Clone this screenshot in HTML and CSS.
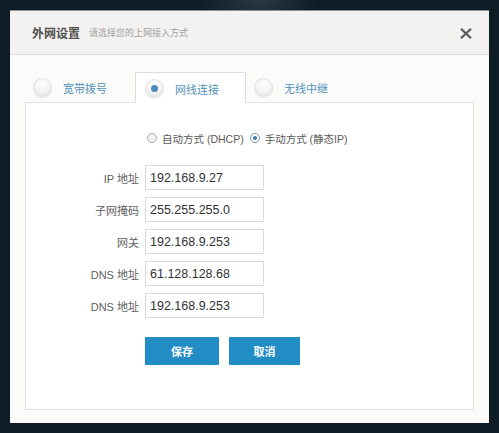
FILE: index.html
```html
<!DOCTYPE html>
<html>
<head>
<meta charset="utf-8">
<link rel="stylesheet" href="styles.css">
</head>
<body>
<div class="page">
  <div class="dialog">
    <div class="header">
      <span class="title">外网设置</span>
      <span class="subtitle">请选择您的上网接入方式</span>
      <svg class="close" width="12" height="11" viewBox="0 0 12 11"><path d="M1 0.8 L11 10.2 M11 0.8 L1 10.2" stroke="#55595d" stroke-width="2.2" fill="none"/></svg>
    </div>
    <div class="body">
      <div class="tabs">
        <div class="tab"><span class="bigradio"></span><span class="tablabel">宽带拨号</span></div>
        <div class="tab active"><span class="bigradio on"></span><span class="tablabel">网线连接</span></div>
        <div class="tab"><span class="bigradio"></span><span class="tablabel">无线中继</span></div>
      </div>
      <div class="panel">
        <div class="modes">
          <span class="mode"><span class="smallradio"></span>自动方式 (DHCP)</span>
          <span class="mode"><span class="smallradio on"></span>手动方式 (静态IP)</span>
        </div>
        <div class="form">
          <div class="row"><span class="label">IP 地址</span><div class="field">192.168.9.27</div></div>
          <div class="row"><span class="label">子网掩码</span><div class="field">255.255.255.0</div></div>
          <div class="row"><span class="label">网关</span><div class="field">192.168.9.253</div></div>
          <div class="row"><span class="label">DNS 地址</span><div class="field">61.128.128.68</div></div>
          <div class="row"><span class="label">DNS 地址</span><div class="field">192.168.9.253</div></div>
        </div>
        <div class="buttons">
          <div class="btn save">保存</div>
          <div class="btn cancel">取消</div>
        </div>
      </div>
    </div>
  </div>
</div>
</body>
</html>
```
FILE: styles.css
```css
html, body {
  margin: 0;
  padding: 0;
}
body {
  width: 499px;
  height: 433px;
  overflow: hidden;
  background: radial-gradient(ellipse 60px 30px at 258px 0px, #2a3a42 0%, #0e1d25 100%), #0c1a22;
  font-family: "Liberation Sans", "Noto Sans CJK SC", sans-serif;
}
.page {
  padding: 10px 10px 0 10px;
}
.dialog {
  width: 479px;
  height: 413px;
  background: #fbfbfa;
  box-sizing: border-box;
  border-top: 1px solid #8a9094;
  display: flex;
  flex-direction: column;
}
.header {
  height: 43px;
  background: #f3f2f0;
  border-bottom: 1px solid #dcdcda;
  display: flex;
  align-items: center;
  padding-left: 22px;
  padding-right: 17px;
}
.title {
  font-size: 12px;
  font-weight: bold;
  color: #4e4e4e;
}
.subtitle {
  font-size: 9px;
  color: #a0a0a0;
  margin-left: 9px;
}
.close {
  margin-left: auto;
  margin-top: 1px;
}
.body {
  padding: 17px 15px 0 15px;
}
.tabs {
  display: flex;
  height: 30px;
}
.tab {
  width: 110px;
  height: 30px;
  box-sizing: border-box;
  display: flex;
  align-items: center;
  padding-left: 8px;
  padding-top: 1px;
}
.tab.active {
  background: #fff;
  border: 1px solid #dedede;
  border-bottom: none;
  height: 31px;
  margin-bottom: -1px;
  position: relative;
  z-index: 1;
  padding-left: 9px;
  width: 111px;
}
.bigradio {
  width: 17px;
  height: 17px;
  border-radius: 50%;
  border: 1px solid #e2e2e2;
  background: radial-gradient(circle at 50% 30%, #ffffff 0%, #f2f2f2 55%, #dcdcdc 100%);
  box-shadow: 0 1px 1px rgba(0,0,0,0.08);
  position: relative;
  flex: none;
}
.bigradio.on::after {
  content: "";
  position: absolute;
  left: 5px;
  top: 5px;
  width: 7px;
  height: 7px;
  border-radius: 50%;
  background: #4d8dbe;
}
.tablabel {
  margin-left: 11px;
  font-size: 11px;
  color: #5493b8;
}
.panel {
  height: 308px;
  box-sizing: border-box;
  background: #fff;
  border: 1px solid #e0e0e0;
  padding-top: 27px;
}
.modes {
  display: flex;
  height: 16px;
  align-items: center;
  padding-left: 121px;
  font-size: 10.5px;
  color: #5a5a5a;
}
.mode {
  display: flex;
  align-items: center;
  margin-right: 6px;
}
.smallradio {
  width: 8px;
  height: 8px;
  border-radius: 50%;
  border: 1px solid #a9a9a9;
  background: #f2f2f2;
  margin-right: 5px;
  position: relative;
}
.smallradio.on {
  border-color: #7a9cb8;
  background: #fff;
}
.smallradio.on::after {
  content: "";
  position: absolute;
  left: 2px;
  top: 2px;
  width: 4px;
  height: 4px;
  border-radius: 50%;
  background: #3f78a8;
}
.form {
  margin-top: 19px;
  display: flex;
  flex-direction: column;
  gap: 7px;
}
.row {
  display: flex;
  align-items: center;
  height: 25px;
}
.label {
  width: 113px;
  text-align: right;
  font-size: 11px;
  color: #5e5e5e;
}
.field {
  margin-left: 6px;
  width: 119px;
  height: 25px;
  box-sizing: border-box;
  border: 1px solid #dadada;
  background: #fff;
  font-size: 12.5px;
  color: #333;
  padding-left: 4px;
  display: flex;
  align-items: center;
}
.buttons {
  margin-top: 19px;
  padding-left: 119px;
  display: flex;
  gap: 10px;
}
.btn {
  height: 28px;
  background: #228dc5;
  color: #fff;
  font-size: 11px;
  font-weight: bold;
  display: flex;
  align-items: center;
  justify-content: center;
}
.save {
  width: 74px;
}
.cancel {
  width: 71px;
}
```
